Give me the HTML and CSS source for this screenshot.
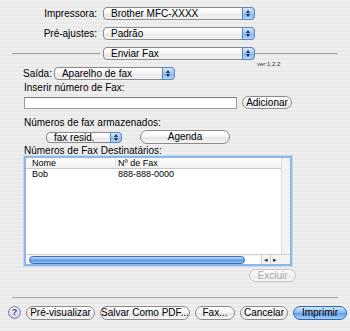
FILE: index.html
```html
<!DOCTYPE html>
<html lang="pt">

<head>
    <meta charset="UTF-8">
    <meta name="viewport" content="width=device-width, initial-scale=1.0">
    <title>Imprimir - Enviar Fax</title>
    <link rel="stylesheet" href="styles.css">
</head>

<body>
    <div id="sheet">
        <!-- impressora / pré-ajustes -->
        <div class="row top-row">
            <span class="top-label">Impressora:</span>
            <div class="popup wide">Brother MFC-XXXX<span class="arrows"></span></div>
        </div>
        <div class="row top-row gap7">
            <span class="top-label">Pré-ajustes:</span>
            <div class="popup wide">Padrão<span class="arrows"></span></div>
        </div>
        <div class="row section gap7">
            <div class="rule left"></div>
            <div class="popup wide">Enviar Fax<span class="arrows"></span></div>
            <div class="rule right"></div>
        </div>
        <div class="ver">ver:1.2.2</div>

        <div class="row saida">
            <span class="label">Saída:</span>
            <div class="popup out">Aparelho de fax<span class="arrows"></span></div>
        </div>

        <div class="caption cap1">Inserir número de Fax:</div>
        <div class="row input-row">
            <div class="field"></div>
            <div class="btn add">Adicionar</div>
        </div>

        <div class="caption cap2">Números de fax armazenados:</div>
        <div class="row stored">
            <div class="popup small">fax resid.<span class="arrows"></span></div>
            <div class="btn agenda">Agenda</div>
        </div>

        <div class="caption cap3">Números de Fax Destinatários:</div>
        <div class="table">
            <div class="grid">
                <div class="body">
                    <div class="thead">
                        <span class="c1">Nome</span>
                        <span class="c2">Nº de Fax</span>
                    </div>
                    <div class="tr">
                        <span class="c1">Bob</span>
                        <span class="c2">888-888-0000</span>
                    </div>
                </div>
                <div class="vscroll"></div>
            </div>
            <div class="hscroll">
                <div class="thumb"></div>
                <div class="track"></div>
                <div class="arr">&#9666;</div>
                <div class="arr">&#9656;</div>
                <div class="corner"></div>
            </div>
        </div>
        <div class="row del-row">
            <div class="btn disabled excluir">Excluir</div>
        </div>

        <div class="bottom-rule"></div>
        <div class="row footer">
            <div class="help">?</div>
            <div class="btn prev">Pré-visualizar</div>
            <div class="btn pdf">Salvar Como PDF...</div>
            <div class="btn fax">Fax...</div>
            <div class="btn cancel">Cancelar</div>
            <div class="btn default print">Imprimir</div>
        </div>
    </div>
</body>

</html>
```

FILE: styles.css
```css
* {
    margin: 0;
    padding: 0;
    box-sizing: border-box;
}

body {
    width: 350px;
    height: 331px;
    overflow: hidden;
    font-family: "Liberation Sans", Arial, sans-serif;
    font-size: 10px;
    color: #000;
    background: #ededed repeating-linear-gradient(180deg, #efefef 0, #efefef 2px, #e9e9e9 2px, #e9e9e9 4px);
}

#sheet {
    padding-top: 7px;
}

.row {
    display: flex;
    align-items: center;
}

.gap7 {
    margin-top: 7px;
}

/* popups */
.popup {
    position: relative;
    height: 13px;
    line-height: 11px;
    padding-left: 7px;
    border: 1px solid #8c8c8c;
    border-radius: 4px;
    background: linear-gradient(#ffffff, #f4f4f4 50%, #e6e6e6 51%, #f2f2f2);
    white-space: nowrap;
}

.arrows {
    position: absolute;
    top: -1px;
    right: -1px;
    width: 13px;
    height: 13px;
    border: 1px solid #5a88c0;
    border-radius: 0 4px 4px 0;
    background: linear-gradient(#d8eafc, #9cc5f2 50%, #7fb3ee 51%, #b6d8fb);
}

.arrows::before,
.arrows::after {
    content: "";
    position: absolute;
    left: 3px;
    border-left: 2.5px solid transparent;
    border-right: 2.5px solid transparent;
}

.arrows::before {
    top: 2px;
    border-bottom: 3px solid #1d2f4a;
}

.arrows::after {
    bottom: 2px;
    border-top: 3px solid #1d2f4a;
}

.top-row {
    height: 13px;
}

.top-label {
    width: 97px;
    text-align: right;
    margin-right: 6px;
}

.popup.wide {
    width: 152px;
}

.section {
    height: 13px;
}

.rule {
    height: 1px;
    background: #9d9d9d;
}

.rule.left {
    margin-left: 12px;
    width: 88px;
    margin-right: 3px;
}

.rule.right {
    width: 83px;
}

.ver {
    height: 7px;
    line-height: 9px;
    padding-left: 257px;
    font-size: 6px;
    color: #333;
}

.saida {
    height: 13px;
    padding-left: 23px;
}

.label {
    margin-right: 2px;
}

.popup.out {
    width: 121px;
}

.caption {
    padding-left: 24px;
    height: 12px;
    line-height: 12px;
}

.cap1 {
    margin-top: 2px;
}

.input-row {
    margin-top: 2px;
    height: 13px;
    padding-left: 24px;
}

.field {
    width: 213px;
    height: 12px;
    background: #fff;
    border: 1px solid #9a9a9a;
    border-top-color: #7a7a7a;
}

/* buttons */
.btn {
    height: 13px;
    line-height: 11px;
    text-align: center;
    border: 1px solid #8a8a8a;
    border-radius: 7px;
    background: linear-gradient(#ffffff, #f5f5f5 50%, #e4e4e4 51%, #f7f7f7);
    white-space: nowrap;
}

.btn.add {
    width: 50px;
    margin-left: 5px;
}

.cap2 {
    margin-top: 8px;
}

.stored {
    margin-top: 1px;
    height: 14px;
    padding-left: 46px;
}

.popup.small {
    width: 76px;
    height: 11px;
    line-height: 9px;
}

.popup.small .arrows {
    width: 12px;
    height: 11px;
}

.popup.small .arrows::before {
    top: 1px;
}

.popup.small .arrows::after {
    bottom: 1px;
}

.btn.agenda {
    width: 90px;
    height: 14px;
    margin-left: 18px;
}

.cap3 {
    margin-top: 1px;
    height: 11px;
    line-height: 11px;
}

/* destinatarios */
.table {
    margin-left: 24px;
    width: 268px;
    height: 110px;
    border: 2px solid #8fb7e6;
    box-shadow: 0 0 0 1px #c5dbf3;
    background: #fff;
    display: flex;
    flex-direction: column;
}

.grid {
    flex: 1;
    display: flex;
}

.body {
    flex: 1;
}

.thead,
.tr {
    display: flex;
    height: 11px;
    line-height: 11px;
    font-size: 9px;
}

.thead {
    border-bottom: 1px solid #c8c8c8;
    background: linear-gradient(#ffffff, #f0f0f0);
}

.c1 {
    width: 90px;
    padding-left: 6px;
    border-right: 1px solid #dcdcdc;
}

.tr .c1 {
    border-right: none;
}

.c2 {
    padding-left: 2px;
}

.vscroll {
    width: 9px;
    background: #f3f3f3;
    border-left: 1px solid #dedede;
}

.hscroll {
    height: 10px;
    display: flex;
    align-items: center;
    background: #f4f4f4;
    border-top: 1px solid #d0d0d0;
}

.thumb {
    margin-left: 3px;
    width: 216px;
    height: 8px;
    border-radius: 4px;
    border: 1px solid #3d6fb0;
    background: linear-gradient(#c3dcf7, #6fa8ea 50%, #4d8fe0 51%, #9ac7f5);
}

.track {
    width: 16px;
    height: 8px;
    background: #fff;
    border-radius: 0 4px 4px 0;
}

.arr {
    width: 9px;
    height: 9px;
    line-height: 9px;
    font-size: 7px;
    text-align: center;
    color: #333;
    border-left: 1px solid #cfcfcf;
}

.corner {
    flex: 1;
    height: 9px;
    background: #f4f4f4;
}

.del-row {
    justify-content: flex-end;
    padding-right: 54px;
    margin-top: 3px;
    height: 13px;
}

.btn.disabled {
    color: #a8a8a8;
    border-color: #c4c4c4;
    background: linear-gradient(#fbfbfb, #f3f3f3 50%, #ececec 51%, #f6f6f6);
}

.btn.excluir {
    width: 47px;
}

.bottom-rule {
    margin: 15px 12px 0 12px;
    height: 1px;
    background: #a5a5a5;
}

.footer {
    margin-top: 7px;
    height: 15px;
    padding-left: 8px;
}

.help {
    width: 13px;
    height: 13px;
    border-radius: 50%;
    border: 1px solid #7d7d9a;
    background: radial-gradient(circle at 50% 35%, #ffffff, #d8ccf2 70%, #b9a8e0);
    text-align: center;
    line-height: 11px;
    font-size: 9px;
    font-weight: bold;
    color: #3b3b55;
    margin-right: 5px;
}

.footer .btn {
    height: 14px;
    line-height: 12px;
    margin-right: 5px;
}

.btn.prev {
    width: 69px;
}

.btn.pdf {
    width: 90px;
}

.btn.fax {
    width: 40px;
}

.btn.cancel {
    width: 48px;
}

.btn.print {
    width: 54px;
    margin-right: 0;
}

.btn.default {
    border-color: #3166b0;
    background: linear-gradient(#d6e8fb, #86b9f0 50%, #5d9de9 51%, #a8d3fc);
}
```
